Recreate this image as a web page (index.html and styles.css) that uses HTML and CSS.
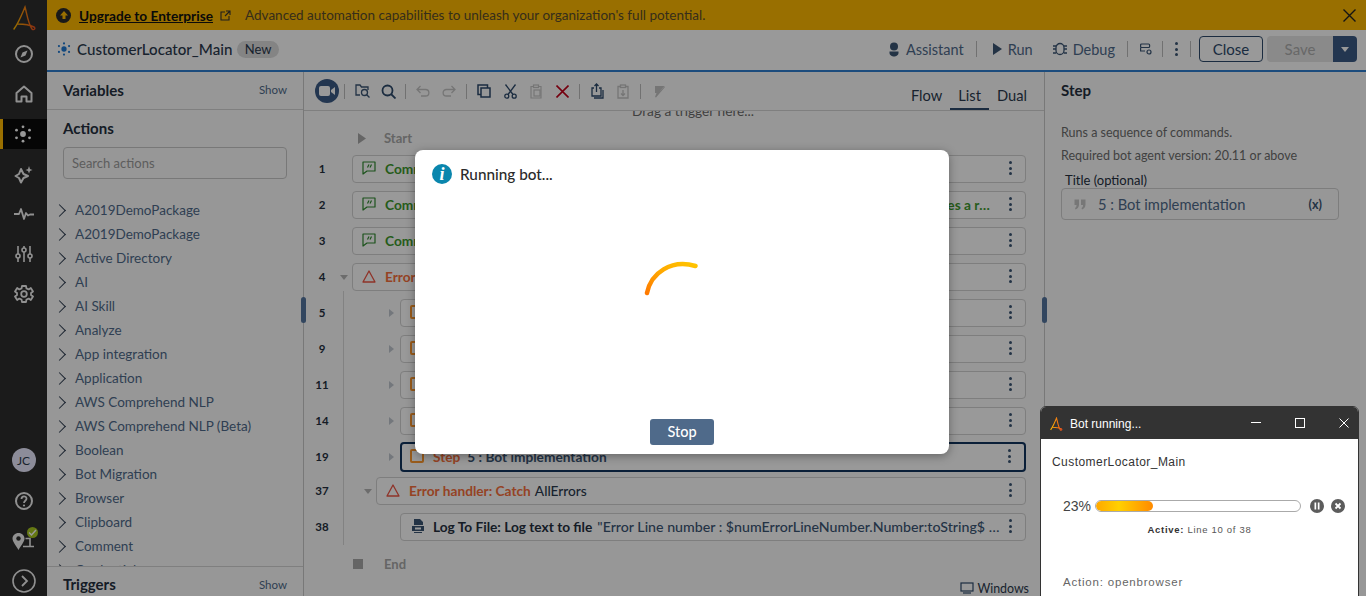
FILE: index.html
```html
<!DOCTYPE html>
<html lang="en">
<head>
  <meta charset="UTF-8">
  <meta name="viewport" content="width=device-width, initial-scale=1.0">
  <link rel="stylesheet" href="styles.css">
  <title>CustomerLocator_Main</title>
</head>
<body>
  <div class="app">

    <!-- left navigation -->
    <nav class="rail">
      <svg class="rail-logo" width="24" height="26" viewBox="0 0 24 26" fill="none"><defs><linearGradient id="logoGrad" x1="0" y1="0" x2="1" y2="0"><stop offset="0" stop-color="#ffb900"/><stop offset="1" stop-color="#e8501e"/></linearGradient></defs><path d="M2 24C7 17 10 9 13 2C15 9 16 18 20 24C22 26 24 23 22 22C18 20 10 19 6 19" stroke="url(#logoGrad)" stroke-width="1.4" stroke-linecap="round"/></svg>
      <div class="rail-top">
        <span class="rail-item"><svg width="20" height="20" viewBox="0 0 20 20" fill="none" stroke="#f0f0f0" stroke-width="2"><circle cx="10" cy="10" r="8"/><path d="M13.500 6.500 11.500 11.500 6.500 13.500 8.500 8.500Z" fill="#f0f0f0" stroke="none"/></svg></span>
        <span class="rail-item"><svg width="20" height="20" viewBox="0 0 20 20" fill="none" stroke="#f0f0f0" stroke-width="2"><path d="M2.500 9 10 2.500 17.500 9V17.500H12.500V12.500H7.500V17.500H2.500Z" stroke-linejoin="round"/></svg></span>
        <span class="rail-item rail-active"><svg width="18" height="18" viewBox="0 0 18 18" fill="#fff"><circle cx="9" cy="9" r="2.900"/><circle cx="9" cy="1.800" r="1.400"/><circle cx="9" cy="16.200" r="1.400"/><circle cx="2.500" cy="5.200" r="1.400"/><circle cx="15.500" cy="5.200" r="1.400"/><circle cx="2.500" cy="12.800" r="1.400"/><circle cx="15.500" cy="12.800" r="1.400"/></svg></span>
        <span class="rail-item"><svg width="20" height="20" viewBox="0 0 20 20" fill="none" stroke="#f0f0f0" stroke-width="2"><path d="M7 5 9.500 10 14 12 9.500 14 7 18.500 5 14 1.500 12 5 10Z" stroke-linejoin="round"/><path d="M15 2 16 5 18.500 6 16 7 15 9.500 14 7 11.500 6 14 5Z" fill="#f0f0f0" stroke="none"/></svg></span>
        <span class="rail-item"><svg width="20" height="14" viewBox="0 0 20 14" fill="none" stroke="#f0f0f0" stroke-width="1.800"><path d="M0 7H5L7 2 10 12 12 6 14 8.500 16 7.500H20" stroke-linejoin="round"/></svg></span>
        <span class="rail-item"><svg width="18" height="18" viewBox="0 0 18 18" fill="none" stroke="#f0f0f0" stroke-width="1.600"><path d="M3 1V9M3 13V17M9 1V3M9 7V17M15 1V9M15 13V17"/><circle cx="3" cy="11" r="2"/><circle cx="9" cy="5" r="2"/><circle cx="15" cy="11" r="2"/></svg></span>
        <span class="rail-item"><svg width="20" height="20" viewBox="0 0 20 20" fill="none" stroke="#f0f0f0" stroke-width="1.800"><path d="M8 2H12L12.500 4.500 14.700 5.400 16.800 4 19 7.500 17 9 17 11 19 12.500 16.800 16 14.700 14.600 12.500 15.500 12 18H8L7.500 15.500 5.300 14.600 3.200 16 1 12.500 3 11 3 9 1 7.500 3.200 4 5.300 5.400 7.500 4.500Z" stroke-linejoin="round"/><circle cx="10" cy="10" r="2.800"/></svg></span>
      </div>
      <div class="rail-bottom">
        <span class="avatar">JC</span>
        <span class="rail-item"><svg width="20" height="20" viewBox="0 0 20 20" fill="none" stroke="#f0f0f0" stroke-width="2"><circle cx="10" cy="10" r="8"/><path d="M7.500 8C7.500 4.500 12.500 4.500 12.500 7.800C12.500 9.800 10 9.800 10 12" stroke-width="1.800"/><circle cx="10" cy="14.500" r="1.100" fill="#f0f0f0" stroke="none"/></svg></span>
        <span class="rail-item rail-agent"><svg width="24" height="20" viewBox="0 0 24 20" fill="none"><path d="M6.500 2C3 2 0.500 4.500 0.500 7.500C0.500 10.500 4 14.500 6.500 19C9 14.500 12.500 10.500 12.500 7.500C12.500 4.500 10 2 6.500 2Z" fill="#f0f0f0"/><circle cx="6.500" cy="7.500" r="2.200" fill="#2e2e2e"/><path d="M11 15.500H22M18 15.500V7.500H13.500" stroke="#f0f0f0" stroke-width="1.600"/></svg><span class="agent-ok"><svg width="9" height="9" viewBox="0 0 9 9" fill="none" stroke="#fff" stroke-width="1.500"><path d="M1 4.500 3.500 7 8 2"/></svg></span></span>
        <span class="rail-item"><svg width="24" height="24" viewBox="0 0 24 24" fill="none" stroke="#f0f0f0" stroke-width="1.600"><circle cx="12" cy="12" r="11"/><path d="M10 7 15 12 10 17" stroke-width="1.800"/></svg></span>
      </div>
    </nav>

    <div class="main">
      <div class="banner">
        <span class="banner-up"><svg width="10" height="10" viewBox="0 0 10 10" fill="#ffba00"><path d="M5 1 9 5.500H6.500V9H3.500V5.500H1Z"/></svg></span>
        <a class="banner-link">Upgrade to Enterprise</a>
        <svg class="banner-ext" width="11" height="11" viewBox="0 0 11 11" fill="none" stroke="#333" stroke-width="1.100"><path d="M5 2H1V10H9V6M6 1H10V5M10 1 5 6"/></svg>
        <span class="banner-text">Advanced automation capabilities to unleash your organization's full potential.</span>
        <svg class="banner-close" width="13" height="13" viewBox="0 0 13 13" stroke="#222" stroke-width="1.400"><path d="M0.500 0.500 12.500 12.500M12.500 0.500 0.500 12.500"/></svg>
      </div>

      <header class="topbar">
        <svg width="14" height="14" viewBox="0 0 18 18" fill="#1e78d2"><circle cx="9" cy="9" r="3.400"/><circle cx="9" cy="1.800" r="1.400"/><circle cx="9" cy="16.200" r="1.400"/><circle cx="2.500" cy="5.200" r="1.400"/><circle cx="15.500" cy="5.200" r="1.400"/><circle cx="2.500" cy="12.800" r="1.400"/><circle cx="15.500" cy="12.800" r="1.400"/></svg>
        <span class="bot-name">CustomerLocator_Main</span>
        <span class="badge">New</span>
        <div class="top-actions">
          <span class="top-act"><svg width="10" height="15" viewBox="0 0 10 15" fill="#3b5574"><circle cx="5" cy="4.500" r="4"/><path d="M0.500 9.500H9.500V11C9.500 13 7 14.500 5 14.500C3 14.500 0.500 13 0.500 11Z"/></svg>Assistant</span>
          <i class="sep"></i>
          <span class="top-act top-run"><svg width="9" height="12" viewBox="0 0 9 12" fill="#3b5574"><path d="M0 0 9 6 0 12Z"/></svg>Run</span>
          <span class="top-act top-debug"><svg width="14" height="14" viewBox="0 0 14 14" fill="none" stroke="#3b5574" stroke-width="1.300"><rect x="3" y="1.500" width="8" height="11" rx="4"/><path d="M0 4H3M11 4H14M0 7H3M11 7H14M0 11H3M11 11H14"/></svg>Debug</span>
          <i class="sep"></i>
          <svg class="top-icon" width="12" height="12" viewBox="0 0 12 12" fill="none" stroke="#3b5574" stroke-width="1.200"><rect x="0.600" y="1" width="9" height="3.500" rx="1"/><path d="M0.600 4.500V8H5"/><circle cx="9" cy="9" r="2"/></svg>
          <i class="sep"></i>
          <span class="dots"><i></i><i></i><i></i></span>
          <i class="sep"></i>
          <button class="btn-close">Close</button>
          <div class="save-group">
            <button class="btn-save">Save</button>
            <span class="btn-caret"></span>
          </div>
        </div>
      </header>

      <div class="workspace">
        <aside class="left">
          <div class="panel-head"><h3>Variables</h3><span class="show">Show</span></div>
          <div class="actions-head">
            <h3>Actions</h3>
            <input class="search" type="text" placeholder="Search actions">
          </div>
          <ul class="pkg-list">
            <li>A2019DemoPackage</li>
            <li>A2019DemoPackage</li>
            <li>Active Directory</li>
            <li>AI</li>
            <li>AI Skill</li>
            <li>Analyze</li>
            <li>App integration</li>
            <li>Application</li>
            <li>AWS Comprehend NLP</li>
            <li>AWS Comprehend NLP (Beta)</li>
            <li>Boolean</li>
            <li>Bot Migration</li>
            <li>Browser</li>
            <li>Clipboard</li>
            <li>Comment</li>
            <li>Credential</li>
          </ul>
          <div class="panel-foot"><h3>Triggers</h3><span class="show">Show</span></div>
        </aside>

        <section class="center">
          <div class="toolbar">
            <span class="rec"><svg width="16" height="10" viewBox="0 0 16 10" fill="#fff"><rect x="0" y="0" width="11" height="10" rx="2"/><path d="M12 4 16 1V9L12 6Z"/></svg></span>
            <i class="sep"></i>
            <span class="tool"><svg width="15" height="14" viewBox="0 0 15 14" fill="none" stroke="#3b5574" stroke-width="1.300"><path d="M5 11H1V1H5L6.500 3H13V6"/><circle cx="9.500" cy="8.500" r="3"/><path d="M11.700 10.700 14.500 13.500"/></svg></span>
            <span class="tool"><svg width="15" height="15" viewBox="0 0 15 15" fill="none" stroke="#2d4a6b" stroke-width="1.800"><circle cx="6.500" cy="6.500" r="5"/><path d="M10 10 14.500 14.500"/></svg></span>
            <i class="sep"></i>
            <span class="tool"><svg width="14" height="12" viewBox="0 0 14 12" fill="none" stroke="#c4c4c4" stroke-width="1.300"><path d="M4.500 1 1 4.500 4.500 8M1 4.500H9.500C14 4.500 14 11 9.500 11H5"/></svg></span>
            <span class="tool"><svg width="14" height="12" viewBox="0 0 14 12" fill="none" stroke="#c4c4c4" stroke-width="1.300"><path d="M9.500 1 13 4.500 9.500 8M13 4.500H4.500C0 4.500 0 11 4.500 11H9"/></svg></span>
            <i class="sep"></i>
            <span class="tool"><svg width="14" height="14" viewBox="0 0 14 14" fill="none" stroke="#2d4a6b" stroke-width="1.500"><rect x="4" y="4" width="9" height="9"/><path d="M4 10.500H1V1H10.500V4"/></svg></span>
            <span class="tool"><svg width="13" height="15" viewBox="0 0 13 15" fill="none" stroke="#2d4a6b" stroke-width="1.300"><circle cx="2.800" cy="12.200" r="2"/><circle cx="10.200" cy="12.200" r="2"/><path d="M4 10.500 11.500 0.500M9 10.500 1.500 0.500"/></svg></span>
            <span class="tool"><svg width="12" height="15" viewBox="0 0 12 15" fill="none" stroke="#c4c4c4" stroke-width="1.200"><path d="M3 2.500H1V14H11V2.500H9"/><rect x="3.500" y="1" width="5" height="2.500"/><rect x="4" y="6" width="6" height="6"/></svg></span>
            <span class="tool"><svg width="13" height="13" viewBox="0 0 13 13" stroke="#c4001a" stroke-width="1.600"><path d="M0.500 0.500 12.500 12.500M12.500 0.500 0.500 12.500"/></svg></span>
            <i class="sep"></i>
            <span class="tool"><svg width="13" height="16" viewBox="0 0 13 16" fill="none" stroke="#2d4a6b" stroke-width="1.300"><path d="M3 5H1V13H10V5H8M5.500 9V1M3.500 3 5.500 1 7.500 3M12 7V15H3"/></svg></span>
            <span class="tool"><svg width="12" height="15" viewBox="0 0 12 15" fill="none" stroke="#c4c4c4" stroke-width="1.300"><path d="M3 2.500H1V14H11V2.500H9M6 6V11.500M4 9.500 6 11.500 8 9.500"/><rect x="3.500" y="1" width="5" height="2.500"/></svg></span>
            <i class="sep"></i>
            <span class="tool"><svg width="13" height="13" viewBox="0 0 13 13" fill="#c4c4c4"><path d="M3 1H12.500L7.500 6.500 12.500 1.500 13 2 4 12.500 3 12 4.500 8H3Z"/></svg></span>
            <div class="tabs">
              <span>Flow</span>
              <span class="tab-on">List</span>
              <span>Dual</span>
            </div>
          </div>

          <div class="canvas">
            <div class="drop-hint">Drag a trigger here...</div>
            <div class="flow-start"><svg width="8" height="11" viewBox="0 0 8 11" fill="#a8a8a8"><path d="M0 0 8 5.500 0 11Z"/></svg><span>Start</span></div>

            <div class="rows">
              <i class="tree-line"></i>
              <div class="row">
                <span class="num">1</span>
                <div class="cmd"><svg class="ic" width="14" height="14" viewBox="0 0 14 14" fill="none" stroke="#2f8a2f" stroke-width="1.200"><path d="M1 1H13V10H5L1 13Z" stroke-linejoin="round"/><path d="M5.500 6.500 7 3.500M8 6.500 9.500 3.500"/></svg><span class="t-green">Comment: Customer locator main bot</span><span class="dots"><i></i><i></i><i></i></span></div>
              </div>
              <div class="row">
                <span class="num">2</span>
                <div class="cmd"><svg class="ic" width="14" height="14" viewBox="0 0 14 14" fill="none" stroke="#2f8a2f" stroke-width="1.200"><path d="M1 1H13V10H5L1 13Z" stroke-linejoin="round"/><path d="M5.500 6.500 7 3.500M8 6.500 9.500 3.500"/></svg><span class="t-green t-clip">Comment: This bot opens the application in browser, searches for a customer and then updates a record for it</span><span class="dots"><i></i><i></i><i></i></span></div>
              </div>
              <div class="row">
                <span class="num">3</span>
                <div class="cmd"><svg class="ic" width="14" height="14" viewBox="0 0 14 14" fill="none" stroke="#2f8a2f" stroke-width="1.200"><path d="M1 1H13V10H5L1 13Z" stroke-linejoin="round"/><path d="M5.500 6.500 7 3.500M8 6.500 9.500 3.500"/></svg><span class="t-green">Comment</span><span class="dots"><i></i><i></i><i></i></span></div>
              </div>
              <div class="row">
                <span class="num">4</span>
                <span class="caret-down"></span>
                <div class="cmd"><svg class="ic" width="14" height="13" viewBox="0 0 14 13" fill="none" stroke="#ee5544" stroke-width="1.300"><path d="M7 1 13 12H1Z" stroke-linejoin="round"/></svg><span class="t-red">Error handler: Try</span><span class="dots"><i></i><i></i><i></i></span></div>
              </div>
              <div class="row row-in2">
                <span class="num">5</span>
                <span class="caret-right"></span>
                <div class="cmd"><span class="step-ic"></span><span class="t-orange">Step</span><span class="dots"><i></i><i></i><i></i></span></div>
              </div>
              <div class="row row-in2">
                <span class="num">9</span>
                <span class="caret-right"></span>
                <div class="cmd"><span class="step-ic"></span><span class="t-orange">Step</span><span class="dots"><i></i><i></i><i></i></span></div>
              </div>
              <div class="row row-in2">
                <span class="num">11</span>
                <span class="caret-right"></span>
                <div class="cmd"><span class="step-ic"></span><span class="t-orange">Step</span><span class="dots"><i></i><i></i><i></i></span></div>
              </div>
              <div class="row row-in2">
                <span class="num">14</span>
                <span class="caret-right"></span>
                <div class="cmd"><span class="step-ic"></span><span class="t-orange">Step</span><span class="dots"><i></i><i></i><i></i></span></div>
              </div>
              <div class="row row-in2 row-sel">
                <span class="num">19</span>
                <span class="caret-right"></span>
                <div class="cmd"><span class="step-ic"></span><span class="t-orange">Step</span><span class="t-blue">5 : Bot implementation</span><span class="dots"><i></i><i></i><i></i></span></div>
              </div>
              <div class="row row-in1">
                <span class="num">37</span>
                <span class="caret-down"></span>
                <div class="cmd"><svg class="ic" width="14" height="13" viewBox="0 0 14 13" fill="none" stroke="#ee5544" stroke-width="1.300"><path d="M7 1 13 12H1Z" stroke-linejoin="round"/></svg><span class="t-red">Error handler: Catch</span><span class="t-dark">AllErrors</span><span class="dots"><i></i><i></i><i></i></span></div>
              </div>
              <div class="row row-in2">
                <span class="num">38</span>
                <div class="cmd"><svg class="ic ic-log" width="12" height="14" viewBox="0 0 12 14" fill="#3b5574"><path d="M2 0H8L11 3V6H2ZM0 7H12V12H0ZM2 13H10V14H2Z"/><rect x="3" y="8.500" width="6" height="2" fill="#fff"/></svg><span class="t-black">Log To File: Log text to file</span><span class="t-blue t-clip t-log">"Error Line number : $numErrorLineNumber.Number:toString$ Error message : $sErrorMessage$</span><span class="dots"><i></i><i></i><i></i></span></div>
              </div>
            </div>

            <div class="flow-end"><i></i><span>End</span></div>
            <div class="os-tag"><svg width="14" height="12" viewBox="0 0 14 12" fill="none" stroke="#2d4a6b" stroke-width="1.200"><rect x="1" y="1" width="12" height="8"/><path d="M3 11H11"/></svg>Windows</div>
          </div>
        </section>

        <aside class="right">
          <h3>Step</h3>
          <p class="desc">Runs a sequence of commands.</p>
          <p class="desc">Required bot agent version: 20.11 or above</p>
          <label class="title-label">Title (optional)</label>
          <div class="title-field">
            <svg width="12" height="11" viewBox="0 0 12 11" fill="#c6c6c6"><path d="M0.500 0.500H5V5.500C5 8 3.500 10 1.500 10.500L1 9C2 8.500 2.500 7.500 2.500 6H0.500ZM7 0.500H11.500V5.500C11.500 8 10 10 8 10.500L7.500 9C8.500 8.500 9 7.500 9 6H7Z"/></svg>
            <span class="title-val">5 : Bot implementation</span>
            <span class="var-x">(x)</span>
          </div>
        </aside>
      </div>
    </div>
  </div>

  <!-- things on top of the page -->
  <i class="handle handle-left"></i>
  <i class="handle handle-right"></i>
  <div class="dim"></div>

  <div class="modal">
    <div class="modal-head">
      <span class="info-ic">i</span>
      <span>Running bot...</span>
    </div>
    <div class="modal-body">
      <svg width="56" height="36" viewBox="0 0 56 36" fill="none"><defs><linearGradient id="spin" x1="0" y1="1" x2="1" y2="0"><stop offset="0" stop-color="#ff7a00"/><stop offset=".5" stop-color="#ffa800"/><stop offset="1" stop-color="#ffc400"/></linearGradient></defs><path d="M3 33C7 13 27 -1 51.500 6" stroke="url(#spin)" stroke-width="4.500" stroke-linecap="round"/></svg>
    </div>
    <button class="btn-stop">Stop</button>
  </div>

  <div class="bot-win">
    <div class="win-title">
      <svg width="14" height="14" viewBox="0 0 24 26" fill="none"><path d="M2 24C7 17 10 9 13 2C15 9 16 18 20 24C22 26 24 23 22 22C18 20 10 19 6 19" stroke="url(#logoGrad)" stroke-width="2"/></svg>
      <span class="win-name">Bot running...</span>
      <svg class="win-btn" width="10" height="10" viewBox="0 0 10 10" stroke="#fff"><path d="M0 4.500H10"/></svg>
      <svg class="win-btn" width="10" height="10" viewBox="0 0 10 10" fill="none" stroke="#fff"><rect x="0.500" y="0.500" width="9" height="9"/></svg>
      <svg class="win-btn" width="10" height="10" viewBox="0 0 10 10" stroke="#fff"><path d="M0.500 0.500 9.500 9.500M9.500 0.500 0.500 9.500"/></svg>
    </div>
    <div class="win-body">
      <div class="win-bot">CustomerLocator_Main</div>
      <div class="win-progress">
        <span class="pct">23%</span>
        <div class="bar"><div class="bar-fill" style="width:28%"></div></div>
        <span class="round-ic"><svg width="14" height="14" viewBox="0 0 14 14" fill="#5c5c5c"><circle cx="7" cy="7" r="7"/><path d="M4.500 3.500H6.200V10.500H4.500ZM7.800 3.500H9.500V10.500H7.800Z" fill="#fff"/></svg></span>
        <span class="round-ic"><svg width="14" height="14" viewBox="0 0 14 14" fill="#5c5c5c"><circle cx="7" cy="7" r="7"/><path d="M4.500 4.500 9.500 9.500M9.500 4.500 4.500 9.500" stroke="#fff" stroke-width="1.800"/></svg></span>
      </div>
      <div class="win-active"><b>Active:</b> Line 10 of 38</div>
      <div class="win-action">Action: openbrowser</div>
    </div>
  </div>
</body>
</html>
```

FILE: styles.css
```css
*{
  box-sizing:border-box;
}

body,ul,li,h3,p{
  margin:0px; padding:0px; list-style:none;
}

html,body{
  height:100%;
}

body{
  position:relative; overflow:hidden; background:#fff; color:#2b3a4e;
  font-family:"Lato","Noto Sans",sans-serif; font-size:14px;
}

i{
  font-style:normal;
}

button{
  font-family:inherit; cursor:pointer;
}

h3{
  font-size:15px; font-weight:700; color:#25303f;
}

.app{
  display:flex; height:596px;
}

/* left navigation */

.rail{
  width:47px; flex:none; display:flex; flex-direction:column; align-items:center; background:#2e2e2e; overflow:hidden;
}

.rail-logo{
  margin-top:5px; margin-bottom:3px; flex:none;
}

.rail-top{
  width:100%; display:flex; flex-direction:column; align-items:center;
}

.rail-item{
  position:relative; width:100%; height:40px; flex:none; display:flex; align-items:center; justify-content:center;
}

.rail-active{
  height:30px; margin:5px 0px; background:#0a0a0a; border-left:3px solid #ffba00; padding-right:4px;
}

.rail-bottom{
  width:100%; margin-top:auto; margin-bottom:-5px; display:flex; flex-direction:column; align-items:center; flex:none;
}

.avatar{
  width:24px; height:24px; margin-bottom:9px; border-radius:50%; background:#eaeaff; color:#2b3a4e;
  font-size:12px; display:flex; align-items:center; justify-content:center;
}

.agent-ok{
  position:absolute; left:27px; top:6px; width:11px; height:11px; border-radius:50%; background:#a8c81f;
  display:flex; align-items:center; justify-content:center;
}

.main{
  flex:1; min-width:0; display:flex; flex-direction:column;
}

/* banner */

.banner{
  height:30px; flex:none; display:flex; align-items:center; padding:0px 10px 0px 9px; background:#ffba00; color:#222;
}

.banner-up{
  width:15px; height:15px; border-radius:50%; background:#2b2b2b; display:flex; align-items:center; justify-content:center;
}

.banner-link{
  margin-left:8px; font-size:13.700px; font-weight:700; text-decoration:underline; color:#111;
}

.banner-ext{
  margin-left:7px;
}

.banner-text{
  margin-left:14px; font-size:13.500px; color:#5a4c2c;
}

.banner-close{
  margin-left:auto;
}

/* top bar */

.topbar{
  height:42px; flex:none; display:flex; align-items:center; padding:0px 9px 2px 10px; border-bottom:2px solid #2f7fd0; background:#fff;
}

.bot-name{
  margin-left:6px; font-size:15.100px; font-weight:500; color:#2b3a4e;
}

.badge{
  margin-left:5px; padding:0px 7.500px; height:17px; line-height:17px; border-radius:9px; background:#dcdcdc; font-size:13px;
}

.top-actions{
  margin-left:auto; display:flex; align-items:center; color:#4f6a8a; font-size:14.500px;
}

.top-act{
  display:flex; align-items:center; gap:7px;
}

.top-run{
  margin-left:4px; gap:6px;
}

.top-debug{
  margin-left:20px; gap:6px;
}

.sep{
  display:block; width:1px; height:16px; background:#bdbdbd; margin:0px 12px; flex:none;
}

.top-icon{
  margin-right:-2px; flex:none;
}

.dots{
  display:flex; flex-direction:column; gap:2.500px; flex:none; width:3px;
}

.dots i{
  display:block; width:3px; height:3px; border-radius:50%; background:#3b5574;
}

.btn-close{
  width:64px; height:26px; margin-left:-4px; border:1px solid #2d4a6b; border-radius:4px; background:#fff; color:#2d4a6b; font-size:15px; padding:0px;
}

.save-group{
  display:flex; margin-left:4px;
}

.btn-save{
  width:66px; height:26px; border:none; border-radius:4px 0px 0px 4px; background:#e6e6e6; color:#adadad; font-size:15px; padding:0px;
}

.btn-caret{
  width:24px; height:26px; background:#3b5a85; border-radius:0px 4px 4px 0px; display:flex; align-items:center; justify-content:center;
}

.btn-caret::after{
  content:""; border-left:4.500px solid transparent; border-right:4.500px solid transparent; border-top:5px solid #fff;
}

.workspace{
  flex:1; min-height:0; display:flex;
}

/* left panel */

.left{
  width:257px; flex:none; display:flex; flex-direction:column; border-right:1px solid #c9c9c9; background:#fcfcfc;
}

.panel-head{
  height:38px; flex:none; display:flex; align-items:center; justify-content:space-between; padding:0px 16px 2px; border-bottom:1px solid #d4d4d4;
}

.panel-foot{
  height:30px; flex:none; display:flex; align-items:center; justify-content:space-between; padding:5px 16px 0px; border-top:1px solid #d4d4d4;
}

.show{
  font-size:11.500px; color:#4f6a8a;
}

.actions-head{
  padding:9px 16px 0px;
}

.search{
  display:block; width:224px; height:32px; margin-top:10px; padding:0px 8px; border:1px solid #c9c9c9; border-radius:4px; background:#fcfcfc;
  font-family:inherit; font-size:13px;
}

.search::placeholder{
  color:#9b9b9b; opacity:1;
}

.pkg-list{
  flex:1; min-height:0; overflow:hidden; padding-top:19px;
}

.pkg-list li{
  position:relative; height:24px; line-height:24px; padding-left:28px; font-size:13.500px; color:#4f6a8a;
}

.pkg-list li::before{
  content:""; position:absolute; left:8px; top:8px; width:8px; height:8px; border-top:1.300px solid #2b3a4e; border-right:1.300px solid #2b3a4e; transform:rotate(45deg);
}

/* center */

.center{
  flex:1; min-width:0; display:flex; flex-direction:column; background:#fcfcfc;
}

.toolbar{
  height:39px; flex:none; display:flex; align-items:center; padding:0px 9px 0px 11px; border-bottom:1px solid #d4d4d4;
}

.toolbar .sep{
  margin:0px 4px; height:15px;
}

.rec{
  width:24px; height:24px; margin-right:1px; border-radius:50%; background:#3b5a85; display:flex; align-items:center; justify-content:center; flex:none;
}

.tool{
  width:26px; display:flex; justify-content:center; flex:none;
}

.tabs{
  margin-left:auto; height:38px; display:flex; align-items:center; font-size:14.700px; color:#2b3a4e;
}

.tabs span{
  height:38px; line-height:46px; padding:0px 8px;
}

.tab-on{
  border-bottom:2px solid #2d4a6b;
}

.canvas{
  position:relative; flex:1; min-height:0; overflow:hidden; display:flex; flex-direction:column;
}

.drop-hint{
  height:14px; margin-top:-9px; text-align:center; padding-left:38px; font-size:13.700px; color:#6b6b6b; flex:none;
}

.flow-start{
  margin-top:12px; height:20px; display:flex; align-items:center; padding-left:54px; font-size:13px; font-weight:700; color:#a8a8a8; flex:none;
}

.flow-start span{
  margin-left:18px;
}

.rows{
  position:relative; margin-top:7px; flex:none;
}

.tree-line{
  position:absolute; left:39px; top:136px; height:254px; width:1px; background:#d9d9d9;
}

.row{
  position:relative; height:28px; margin-bottom:8px; padding-left:48px; padding-right:18px; display:flex; align-items:center;
}

.row-in1{
  padding-left:72px;
}

.row-in2{
  padding-left:96px;
}

.num{
  position:absolute; left:0px; top:0px; width:36px; height:28px; line-height:28px; text-align:center; font-size:11.500px; font-weight:700; color:#25303f;
}

.caret-down,.caret-right{
  position:absolute; width:0px; height:0px;
}

.caret-down{
  left:36px; top:12px; border-left:4.500px solid transparent; border-right:4.500px solid transparent; border-top:5px solid #b5b5b5;
}

.row-in1 .caret-down{
  left:60px;
}

.caret-right{
  left:85px; top:10px; border-top:4.500px solid transparent; border-bottom:4.500px solid transparent; border-left:5px solid #c0c7cf;
}

.cmd{
  flex:1; min-width:0; height:28px; display:flex; align-items:center; padding:0px 13px 2px 9px; border:1px solid #d2d2d2; border-radius:4px; background:#fff;
  font-size:13.700px; font-weight:700;
}

.cmd .dots{
  margin-left:auto;
}

.ic{
  flex:none; margin-right:9px;
}

.ic-log{
  margin:0px 9px 0px 2px;
}

.step-ic{
  width:14px; height:14px; flex:none; margin-right:9px; border:2px solid #ff9a30; border-radius:2px;
}

.t-green{
  color:#3f9a2f;
}

.t-red{
  color:#f8703c; white-space:nowrap;
}

.t-orange{
  color:#f8703c; white-space:nowrap;
}

.t-dark{
  margin-left:4px; color:#2b3a4e; font-weight:500;
}

.t-black{
  color:#25303f; white-space:nowrap;
}

.t-blue{
  margin-left:7px; color:#3b5574;
  white-space:nowrap;
}

.t-clip{
  min-width:0; white-space:nowrap; overflow:hidden; text-overflow:ellipsis; margin-right:17px;
}

.t-log{
  margin-left:5px; margin-right:8px; font-size:14.200px; font-weight:500;
}

.row-sel{
  height:30px; margin-top:-1px; margin-bottom:5px;
}

.row-sel .num{
  top:1px;
}

.row-sel .caret-right{
  top:11px;
}

.row-sel .cmd{
  height:30px; padding-left:8px; border:2px solid #12345e;
}

.flow-end{
  margin-top:5px; height:20px; display:flex; align-items:center; padding-left:49px; font-size:13px; font-weight:700; color:#a8a8a8; flex:none;
}

.flow-end i{
  display:block; width:10px; height:10px; background:#a8a8a8;
}

.flow-end span{
  margin-left:21px;
}

.os-tag{
  margin-top:auto; align-self:flex-end; margin-right:15px; height:14px; display:flex; align-items:center; gap:3px; font-size:12.400px; color:#2b3a4e; flex:none; position:relative; top:-1px;
}

/* right panel */

.right{
  width:322px; flex:none; padding:0px 27px 0px 16px; border-left:1px solid #c9c9c9; background:#fcfcfc;
}

.right h3{
  height:36px; line-height:36px;
}

.desc{
  font-size:12.500px; line-height:23px; color:#6d6d6d;
}

.right .desc:first-of-type{
  margin-top:13px;
}

.title-label{
  display:block; margin:5px 0px 0px 4px; height:16px; line-height:17px; font-size:13px; color:#25303f;
}

.title-field{
  height:32px; display:flex; align-items:center; padding:0px 16px 0px 12px; border:1px solid #d0d0d0; border-radius:4px;
}

.title-val{
  margin-left:12px; font-size:14.700px; color:#4f6a8a;
}

.var-x{
  margin-left:auto; font-size:12.500px; font-weight:700; color:#3b5574;
}

/* overlays */

.handle{
  position:absolute; top:297px; width:5px; height:26px; border-radius:3px; background:#54759f;
}

.handle-left{
  left:301px;
}

.handle-right{
  left:1042px;
}

.dim{
  position:absolute; left:0px; top:0px; width:100%; height:100%; background:rgba(0,0,0,.4);
}

.modal{
  position:absolute; left:415px; top:150px; width:534px; height:304px; display:flex; flex-direction:column; align-items:center;
  background:#fff; border-radius:8px; box-shadow:0 2px 10px rgba(0,0,0,.35);
}

.modal-head{
  width:100%; height:48px; flex:none; display:flex; align-items:center; gap:8px; padding:0px 17px; font-size:15.300px; font-weight:500; color:#2b2b2b;
}

.info-ic{
  width:20px; height:20px; border-radius:50%; background:#0a86ad; color:#fff; font-family:"Liberation Serif",serif; font-style:italic; font-weight:700; font-size:18px;
  display:flex; align-items:center; justify-content:center;
}

.modal-body{
  flex:1; width:100%; padding:62px 0px 0px 229px;
}

.btn-stop{
  width:64px; height:26px; margin-bottom:9px; padding:0px 0px 2px; border:none; border-radius:3px; background:#4f6a8a; color:#fff; font-size:14.500px; font-weight:500;
}

.bot-win{
  position:absolute; left:1040px; top:406px; width:319px; height:200px; background:#fff; border:1px solid #333; border-radius:6px 6px 0px 0px; overflow:hidden;
  font-family:"Liberation Sans",Arial,sans-serif; color:#333;
}

.win-title{
  height:32px; display:flex; align-items:center; padding:2px 9px 0px 8px; background:#333; color:#fff; font-size:12px;
}

.win-name{
  margin-left:7px; flex:1;
}

.win-btn{
  flex:none; margin-left:34px; position:relative; top:-1px;
}

.win-body{
  padding:16px 11px;
}

.win-bot{
  font-size:12px; letter-spacing:.45px;
}

.win-progress{
  margin-top:29px; height:16px; padding-left:11px; display:flex; align-items:center;
}

.pct{
  width:32px; font-size:14px; color:#444;
}

.bar{
  width:206px; height:12px; border:1px solid #aaa; border-radius:6px; background:#fff; overflow:hidden;
}

.bar-fill{
  height:100%; border-radius:5px; background:linear-gradient(90deg,#ffa800,#ffd000 40%,#ff8a00);
}

.round-ic{
  margin-left:7px; width:14px; height:14px; display:block;
}

.bar + .round-ic{
  margin-left:9px;
}

.win-active{
  margin-top:10px; text-align:center; font-size:9.500px; letter-spacing:.7px; color:#555;
}

.win-active b{
  color:#333;
}

.win-action{
  margin-top:41px; padding-left:11px; font-size:11.500px; letter-spacing:.8px; color:#666;
}
```
